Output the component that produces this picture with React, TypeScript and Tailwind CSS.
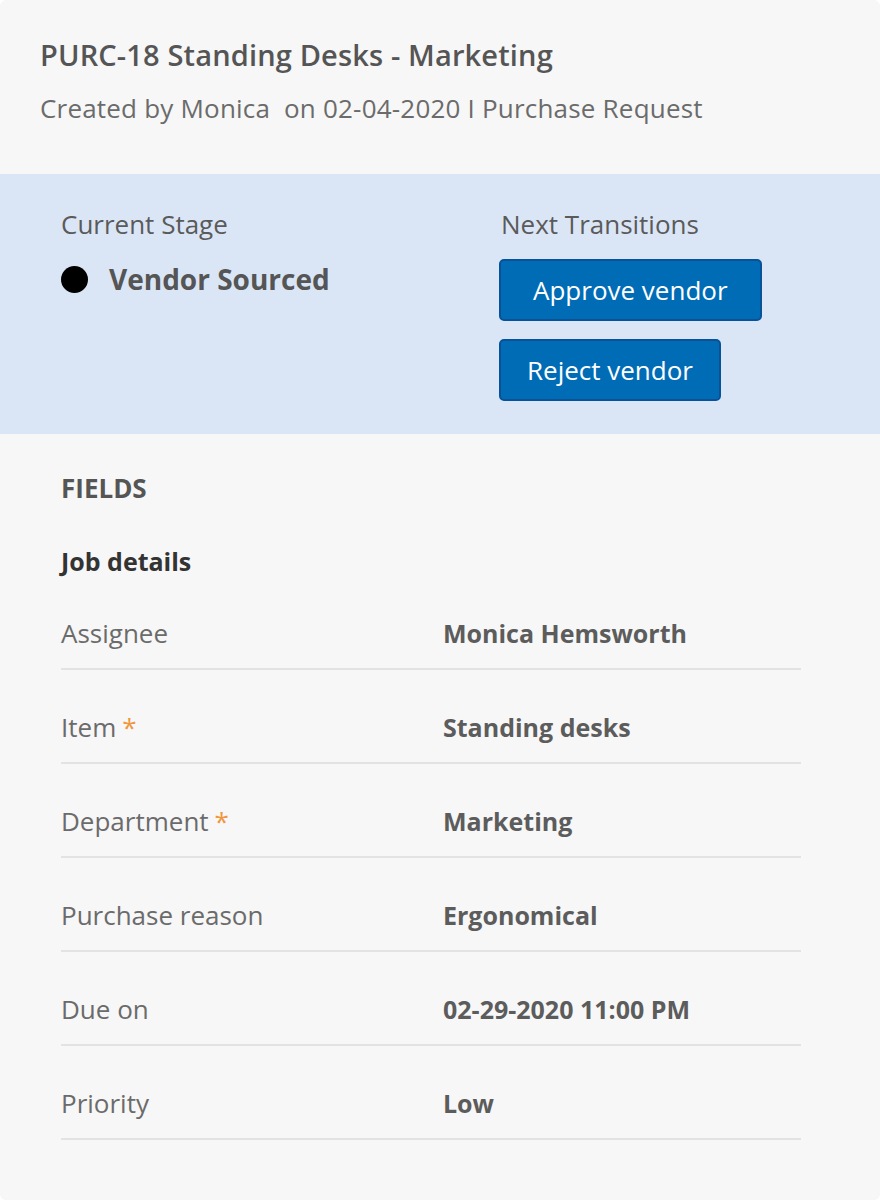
import React from "react";

type Field = { label: string; value: string; required?: boolean };

const fields: Field[] = [
  { label: "Assignee", value: "Monica Hemsworth" },
  { label: "Item", value: "Standing desks", required: true },
  { label: "Department", value: "Marketing", required: true },
  { label: "Purchase reason", value: "Ergonomical" },
  { label: "Due on", value: "02-29-2020 11:00 PM" },
  { label: "Priority", value: "Low" },
];

function FieldRow({ field }: { field: Field }) {
  return (
    <div className="flex h-[94px] items-end border-b-2 border-[#e3e3e3] pb-[19px]">
      <div className="w-[382px] text-[26px] leading-[32px] text-[#6b6b6b]">
        {field.label}
        {field.required && <span className="ml-[6px] text-[#f0963c]">*</span>}
      </div>
      <div className="text-[25px] font-bold leading-[32px] text-[#5c5c5c]">{field.value}</div>
    </div>
  );
}

export default function App() {
  return (
    <div className="min-h-[1200px] w-[880px] bg-white" style={{ fontFamily: '"Open Sans", "Noto Sans", sans-serif' }}>
      <div className="h-[1200px] overflow-hidden rounded-[6px] bg-[#f7f7f7]">
        {/* header */}
        <div className="h-[174px] px-[40px] pt-[37px]">
          <h1 className="text-[29px] font-semibold leading-[36px] tracking-[0.15px] text-[#555555]">
            PURC-18 Standing Desks - Marketing
          </h1>
          <p className="mt-[19px] text-[26px] leading-[32px] tracking-[0.2px] text-[#6b6b6b]">
            Created by Monica&nbsp; on 02-04-2020 I Purchase Request
          </p>
        </div>

        {/* stage band */}
        <div className="flex h-[260px] bg-[#dae6f6] px-[61px]">
          <div className="w-[440px] pt-[34px]">
            <div className="text-[26px] leading-[32px] text-[#5a5a5a]">Current Stage</div>
            <div className="mt-[21px] flex items-center gap-[21px]">
              <span className="h-[27px] w-[27px] rounded-full bg-black" />
              <span className="text-[28px] font-bold leading-[36px] text-[#555555]">Vendor Sourced</span>
            </div>
          </div>
          <div className="pt-[34px]">
            <div className="text-[26px] leading-[32px] text-[#5a5a5a]">Next Transitions</div>
            <div className="ml-[-2px] mt-[19px] flex flex-col items-start gap-[18px]">
              <button className="h-[62px] rounded-[5px] border-2 border-[#0a5298] bg-[#006cb6] px-[32px] text-[26px] text-white">
                Approve vendor
              </button>
              <button className="h-[62px] rounded-[5px] border-2 border-[#0a5298] bg-[#006cb6] px-[26px] text-[26px] text-white">
                Reject vendor
              </button>
            </div>
          </div>
        </div>

        {/* fields */}
        <div className="px-[61px] pt-[39px]">
          <div className="text-[26px] font-bold leading-[30px] text-[#555555]">FIELDS</div>
          <div className="mt-[42px] text-[25px] font-bold leading-[32px] text-[#333333]">Job details</div>
          <div className="mr-[18px] mt-[-1px]">
            {fields.map((f) => (
              <FieldRow key={f.label} field={f} />
            ))}
          </div>
        </div>
      </div>
    </div>
  );
}
